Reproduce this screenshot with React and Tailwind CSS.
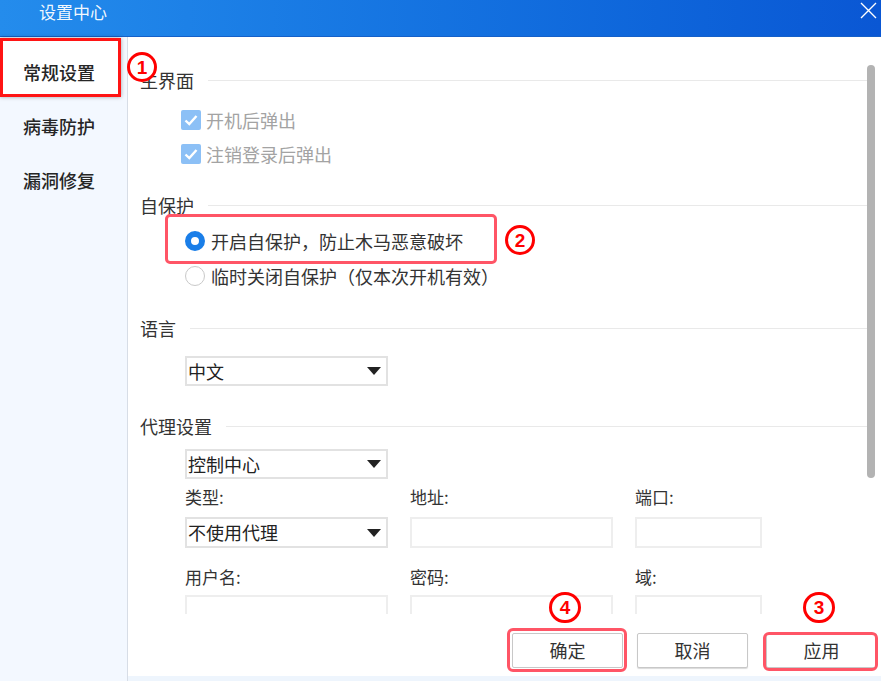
import React from "react";

// numbered annotation marker
const Marker = ({ n, className = "" }) => (
  <div
    className={`absolute flex items-center justify-center rounded-full border-[3px] border-[#ff0000] bg-white text-[#ff0000] font-bold text-[19px] leading-none font-['Liberation_Sans',sans-serif] ${className}`}
  >
    {n}
  </div>
);

const Heading = ({ children, className = "" }) => (
  <div className={`flex h-[34px] items-center gap-[14px] pl-[12px] ${className}`}>
    <span className="text-[18px] text-[#333]">{children}</span>
    <div className="h-px flex-1 bg-[#e9e9e9]" />
  </div>
);

const Arrow = () => (
  <svg width="14" height="8" viewBox="0 0 14 8">
    <path d="M0 0h14L7 8z" fill="#222" />
  </svg>
);

const Select = ({ value, className = "" }) => (
  <div
    className={`flex h-[30px] w-[203px] items-center justify-between border-2 border-[#e2e2e2] pl-[1px] pr-[5px] text-[18px] text-[#222] ${className}`}
  >
    <span>{value}</span>
    <Arrow />
  </div>
);

const Input = ({ w = "w-[203px]" }) => (
  <div className={`h-[31px] ${w} border-2 border-[#eeeeee] bg-white`} />
);

const Check = ({ label, className = "" }) => (
  <div className={`flex h-[28px] items-center gap-[5px] pl-[53px] ${className}`}>
    <div className="flex h-[20px] w-[20px] items-center justify-center rounded-[2px] bg-[#8cc0f6]">
      <svg width="14" height="12" viewBox="0 0 14 12">
        <path d="M1.5 6.5l3.8 3.6L12.5 2" fill="none" stroke="#fff" strokeWidth="2.4" />
      </svg>
    </div>
    <span className="text-[18px] text-[#a3a3a3]">{label}</span>
  </div>
);

export default function App() {
  return (
    <div className="flex h-[681px] w-[881px] flex-col overflow-hidden bg-white font-['Noto_Sans_CJK_SC','Noto_Sans',sans-serif]">
      {/* title bar */}
      <div className="flex h-[37px] shrink-0 items-start justify-between bg-linear-to-r from-[#248cec] to-[#0a57d4] border-b border-[#1560c8]">
        <span className="ml-[39px] -mt-[1px] text-[17px] text-white/95">设置中心</span>
        <svg className="mr-[4px] mt-[2px]" width="17" height="17" viewBox="0 0 17 17">
          <path d="M1 1l15 15M16 1L1 16" stroke="#fff" strokeWidth="1.4" />
        </svg>
      </div>

      <div className="flex flex-1">
        {/* sidebar */}
        <div className="relative w-[128px] shrink-0 border-r border-[#d7dde6] bg-[#f3f8ff] pt-[8px]">
          <div className="absolute left-0 top-[1px] h-[59px] w-[121px] border-[3px] border-[#ff1414] bg-white shadow-[0_0_4px_rgba(0,0,0,0.35)]" />
          <Marker n="1" className="left-[127px] top-[15px] h-[30px] w-[30px]" />
          {["常规设置", "病毒防护", "漏洞修复"].map((t) => (
            <div key={t} className="relative flex h-[54px] items-center pl-[23px] text-[18px] font-medium text-[#262626]">
              {t}
            </div>
          ))}
        </div>

        <div className="flex flex-1 flex-col">
          <div className="flex h-[577px] overflow-hidden">
            {/* settings body */}
            <div className="flex flex-1 flex-col *:shrink-0">
              <Heading className="mt-[26px]">主界面</Heading>
              <Check label="开机后弹出" className="mt-[9px]" />
              <Check label="注销登录后弹出" className="mt-[6px]" />

              <Heading className="mt-[20px]">自保护</Heading>
              <div className="relative mt-[5px] ml-[57px] flex h-[28px] items-center gap-[6px]">
                <div className="absolute -left-[20px] -top-[13px] h-[50px] w-[332px] rounded-[5px] border-[3px] border-[#ff5566]" />
                <div className="h-[20px] w-[20px] rounded-full border-[6px] border-[#1a7ee8] bg-white" />
                <span className="text-[18px] text-[#333]">开启自保护，防止木马恶意破坏</span>
                <Marker n="2" className="left-[320px] -top-[2px] h-[30px] w-[30px]" />
              </div>
              <div className="mt-[7px] ml-[57px] flex h-[28px] items-center gap-[6px]">
                <div className="h-[20px] w-[20px] rounded-full border-[1.5px] border-[#c9c9c9] bg-white" />
                <span className="text-[18px] text-[#333]">临时关闭自保护（仅本次开机有效）</span>
              </div>

              <Heading className="mt-[21px]">语言</Heading>
              <Select value="中文" className="mt-[11px] ml-[57px]" />

              <Heading className="mt-[23px]">代理设置</Heading>
              <Select value="控制中心" className="mt-[6px] ml-[57px]" />

              <div className="mt-[6px] ml-[57px] grid grid-cols-[203px_203px_127px] gap-x-[22px] text-[17px] text-[#333]">
                <div className="flex h-[24px] items-center">类型:</div>
                <div className="flex h-[24px] items-center">地址:</div>
                <div className="flex h-[24px] items-center">端口:</div>
                <div className="mt-[8px]"><Select value="不使用代理" className="h-[31px]" /></div>
                <div className="mt-[8px]"><Input /></div>
                <div className="mt-[8px]"><Input w="w-[127px]" /></div>
                <div className="mt-[17px] flex h-[24px] items-center">用户名:</div>
                <div className="mt-[17px] flex h-[24px] items-center">密码:</div>
                <div className="mt-[17px] flex h-[24px] items-center">域:</div>
                <div className="mt-[6px]"><Input /></div>
                <div className="mt-[6px]"><Input /></div>
                <div className="mt-[6px]"><Input w="w-[127px]" /></div>
              </div>
            </div>

            {/* scrollbar */}
            <div className="w-[14px] shrink-0">
              <div className="mt-[28px] h-[413px] w-[8px] rounded-full bg-[#b3b3b3]" />
            </div>
          </div>

          {/* footer */}
          <div className="flex h-[67px] flex-col">
            <div className="flex flex-1 items-start justify-end pr-[4px] pt-[19px]">
              <div className="relative">
                <div className="absolute -left-[5px] -top-[5px] -right-[4px] -bottom-[4px] rounded-[6px] border-[3px] border-[#ff5566]" />
                <Marker n="4" className="left-[37px] -top-[41px] h-[31px] w-[32px]" />
                <button className="relative flex h-[35px] w-[111px] items-center justify-center rounded-[2px] border border-[#c8c8c8] bg-white text-[18px] text-[#333]">
                  确定
                </button>
              </div>
              <button className="ml-[14px] flex h-[35px] w-[111px] items-center justify-center rounded-[2px] border border-[#c8c8c8] bg-white text-[18px] text-[#333] shadow-[0_1px_1px_rgba(0,0,0,0.15)]">
                取消
              </button>
              <div className="relative ml-[18px]">
                <Marker n="3" className="left-[37px] -top-[41px] h-[31px] w-[32px]" />
                <button className="flex h-[35px] w-[111px] items-center justify-center rounded-[2px] border border-[#c8c8c8] bg-white text-[18px] text-[#333]">
                  应用
                </button>
                <div className="absolute -left-[3px] -top-[1px] -right-[1px] -bottom-[3px] rounded-[6px] border-[3px] border-[#ff5566]" />
              </div>
            </div>
            <div className="h-[5px] bg-[#eef5fd]" />
          </div>
        </div>
      </div>
    </div>
  );
}
